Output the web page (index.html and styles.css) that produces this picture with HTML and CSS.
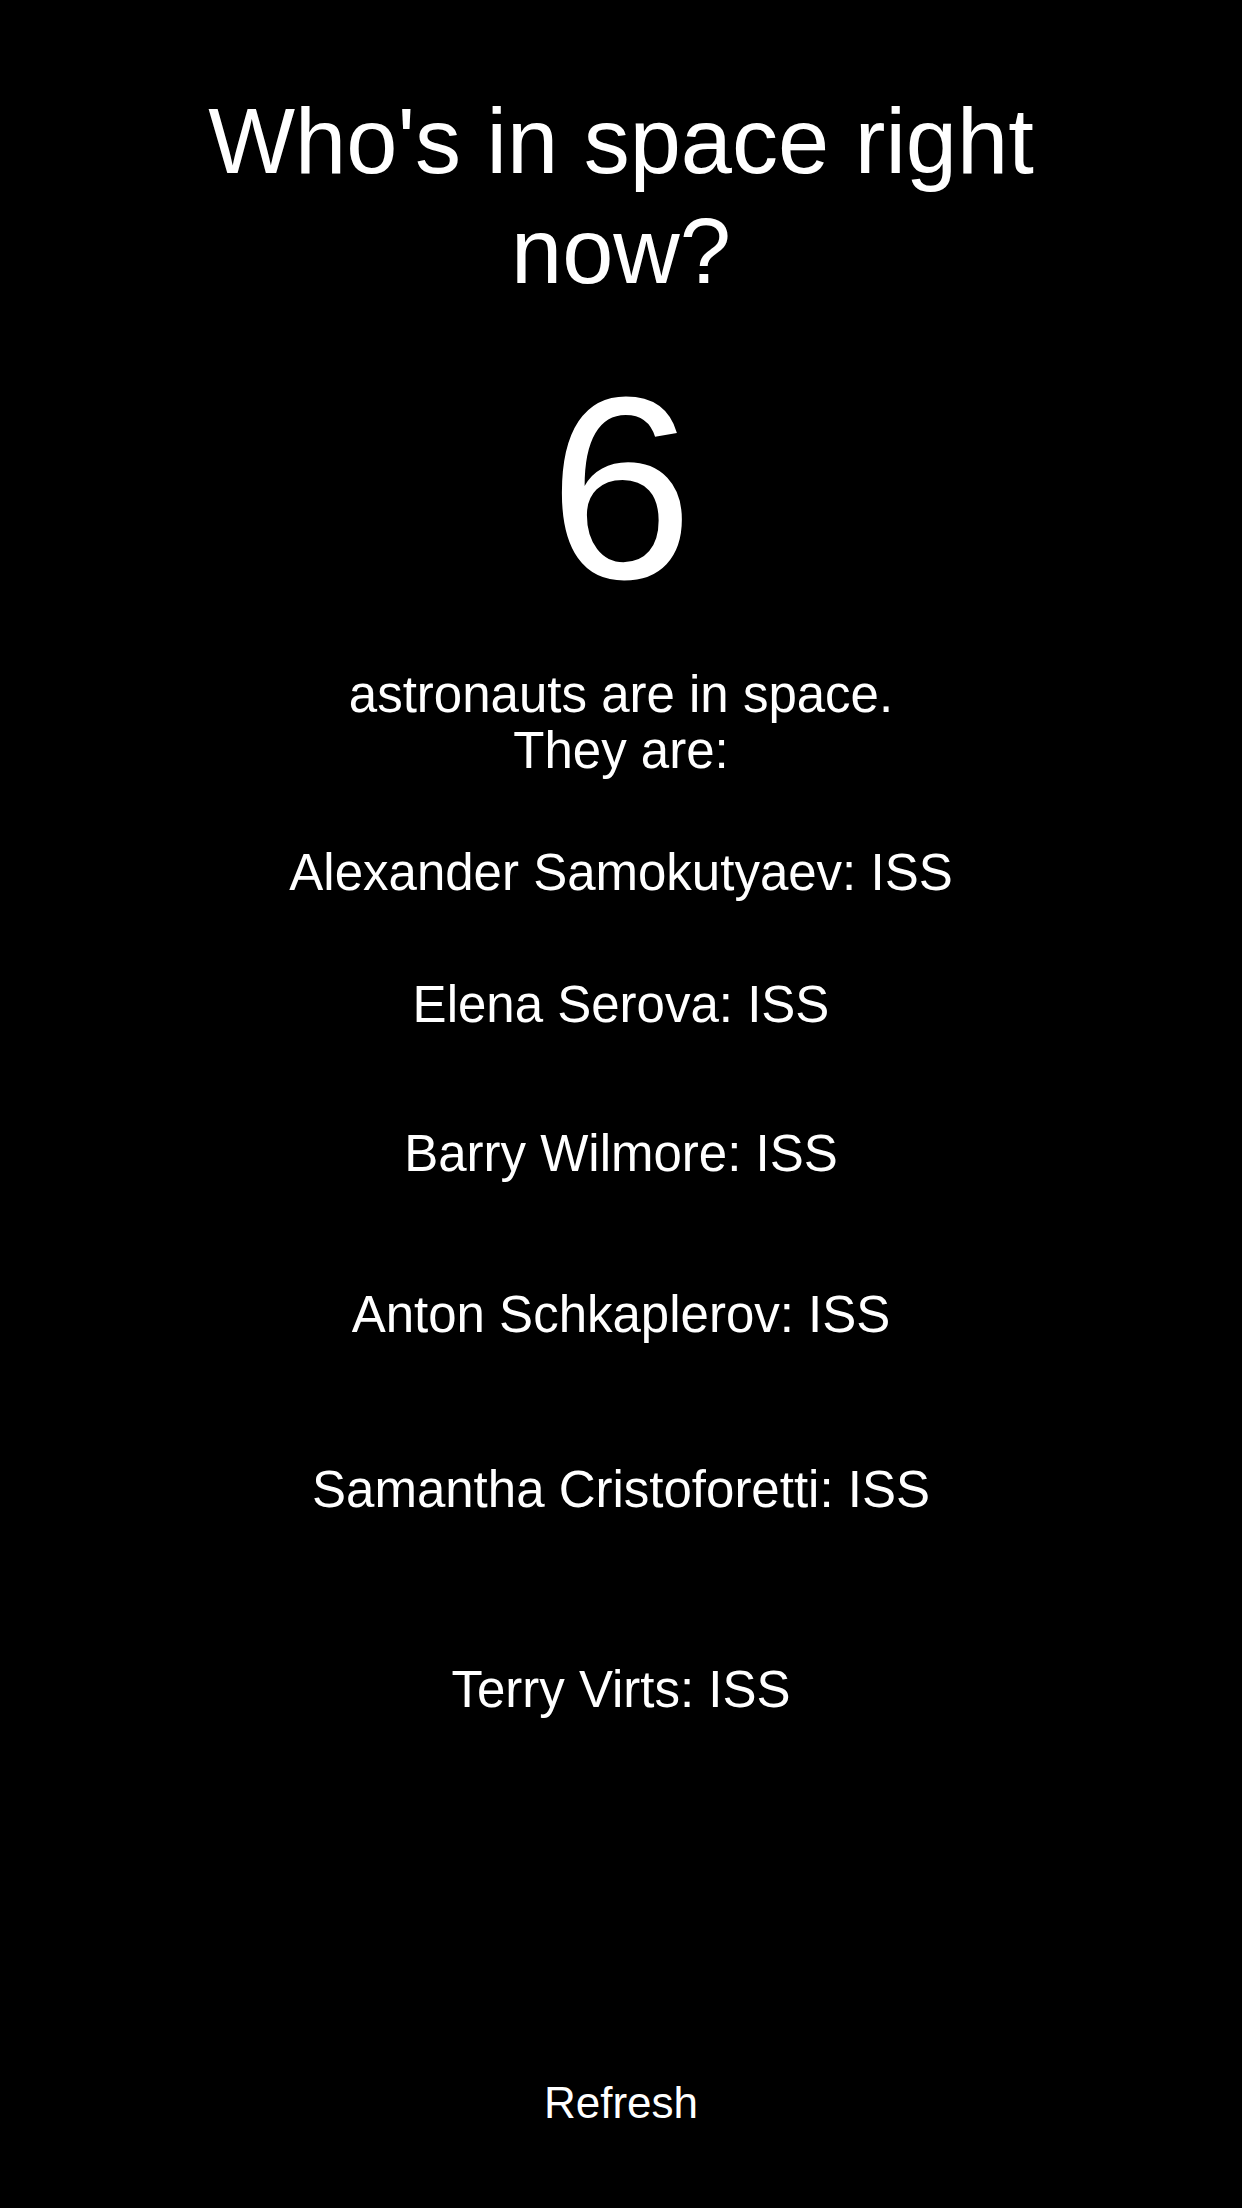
FILE: index.html
```html
<!DOCTYPE html>
<html lang="en">
<head>
<meta charset="utf-8">
<title>Who's in space right now?</title>
<link rel="stylesheet" href="styles.css">
</head>
<body>
<main class="screen">
  <h1 class="title">Who's in space right now?</h1>
  <div class="count">6</div>
  <p class="summary">astronauts are in space.<br>They are:</p>
  <ul class="people">
    <li class="person">Alexander Samokutyaev: ISS</li>
    <li class="person">Elena Serova: ISS</li>
    <li class="person">Barry Wilmore: ISS</li>
    <li class="person">Anton Schkaplerov: ISS</li>
    <li class="person">Samantha Cristoforetti: ISS</li>
    <li class="person">Terry Virts: ISS</li>
  </ul>
  <button class="refresh" type="button">Refresh</button>
</main>
</body>
</html>
```

FILE: styles.css
```css
html, body {
  margin: 0;
  padding: 0;
  background: #000;
}

body {
  color: #fff;
  font-family: "Liberation Sans", Arial, Helvetica, sans-serif;
}

.screen {
  box-sizing: border-box;
  min-height: 2208px;
  display: flex;
  flex-direction: column;
  align-items: center;
  text-align: center;
  padding: 86px 0 79px;
}

.title {
  margin: 0;
  width: 900px;
  font-size: 92px;
  line-height: 110px;
  font-weight: 400;
}

.count {
  margin-top: 52px;
  font-size: 260px;
  line-height: 260px;
}

.summary {
  margin: 49px 0 0;
  font-size: 51px;
  line-height: 56px;
}

.people {
  list-style: none;
  margin: 66px 0 0;
  padding: 0;
  display: flex;
  flex-direction: column;
  align-items: center;
}

.person {
  font-size: 51px;
  line-height: 56px;
}

.person:nth-child(2) { margin-top: 76px; }
.person:nth-child(3) { margin-top: 93px; }
.person:nth-child(4) { margin-top: 105px; }
.person:nth-child(5) { margin-top: 119px; }
.person:nth-child(6) { margin-top: 144px; }

.refresh {
  margin-top: auto;
  padding: 0;
  border: 0;
  background: none;
  color: #fff;
  font-family: "Liberation Sans", Arial, Helvetica, sans-serif;
  font-size: 44px;
  line-height: 52px;
  cursor: pointer;
}
```
